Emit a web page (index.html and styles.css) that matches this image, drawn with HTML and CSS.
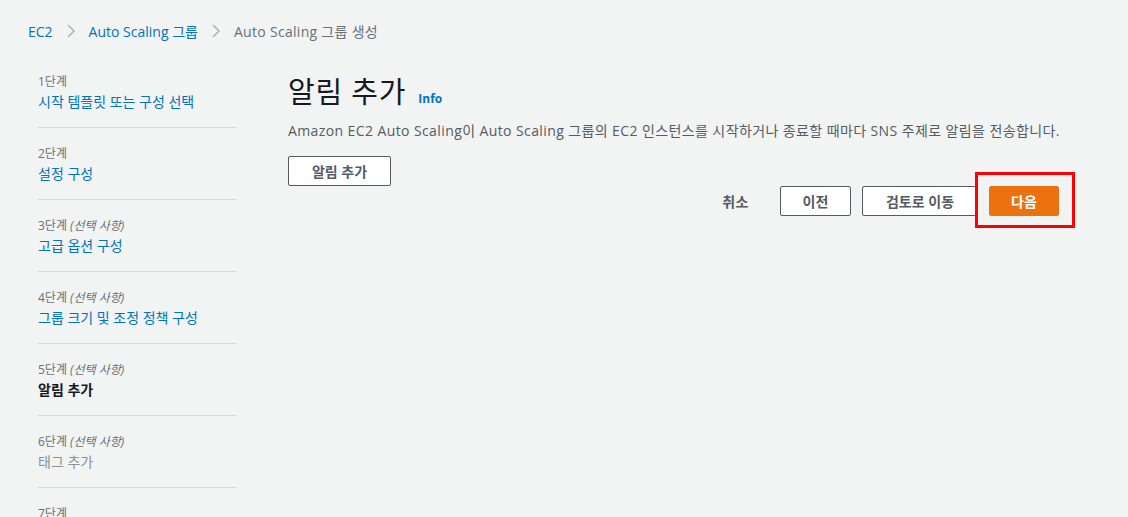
FILE: index.html
```html
<!DOCTYPE html>
<html lang="ko">
<head>
<meta charset="utf-8">
<link rel="stylesheet" href="styles.css">
</head>
<body>
<div class="page">
  <nav class="crumbs">
    <a class="crumb link">EC2</a>
    <svg class="chev" width="12" height="16" viewBox="0 0 12 16"><path d="M3 2 L9 8 L3 14" fill="none" stroke="#aab7b8" stroke-width="1.6"/></svg>
    <a class="crumb link">Auto Scaling 그룹</a>
    <svg class="chev" width="12" height="16" viewBox="0 0 12 16"><path d="M3 2 L9 8 L3 14" fill="none" stroke="#aab7b8" stroke-width="1.6"/></svg>
    <span class="crumb current">Auto Scaling 그룹 생성</span>
  </nav>
  <div class="layout">
    <ul class="steps">
      <li class="step"><div class="label">1단계</div><div class="title link">시작 템플릿 또는 구성 선택</div></li>
      <li class="step"><div class="label">2단계</div><div class="title link">설정 구성</div></li>
      <li class="step"><div class="label">3단계 <i>(선택 사항)</i></div><div class="title link">고급 옵션 구성</div></li>
      <li class="step"><div class="label">4단계 <i>(선택 사항)</i></div><div class="title link">그룹 크기 및 조정 정책 구성</div></li>
      <li class="step"><div class="label">5단계 <i>(선택 사항)</i></div><div class="title active">알림 추가</div></li>
      <li class="step"><div class="label">6단계 <i>(선택 사항)</i></div><div class="title disabled">태그 추가</div></li>
      <li class="step"><div class="label">7단계</div><div class="title disabled">검토</div></li>
    </ul>
    <main class="main">
      <div class="heading"><h1>알림 추가</h1><a class="info">Info</a></div>
      <p class="desc">Amazon EC2 Auto Scaling이 Auto Scaling 그룹의 EC2 인스턴스를 시작하거나 종료할 때마다 SNS 주제로 알림을 전송합니다.</p>
      <button class="btn add">알림 추가</button>
      <div class="actions">
        <button class="btn-link">취소</button>
        <button class="btn w70">이전</button>
        <button class="btn review">검토로 이동</button>
        <div class="primary-wrap">
          <button class="btn primary">다음</button>
          <div class="highlight"></div>
        </div>
      </div>
    </main>
  </div>
</div>
</body>
</html>
```

FILE: styles.css
```css
html, body {
  margin: 0;
  padding: 0;
  background: #f2f3f3;
}
body {
  font-family: "Open Sans", "Noto Sans CJK KR", sans-serif;
  color: #16191f;
  height: 517px;
  overflow: hidden;
}
.page {
  padding: 20px 0 0 28px;
}
.crumbs {
  display: flex;
  align-items: center;
  height: 22px;
  font-size: 14px;
  gap: 12px;
}
.crumb.current { letter-spacing: 0.3px; }
.link { color: #0073bb; text-decoration: none; }
.crumb.current { color: #687078; }
.chev { display: block; }
.layout {
  display: flex;
  margin-top: 32px;
}
.steps {
  list-style: none;
  margin: 0 0 0 10px;
  padding: 0;
  width: 199px;
  flex: none;
}
.step {
  border-bottom: 1px solid #d5dbdb;
  height: 71px;
}
.step .label {
  font-size: 12px;
  color: #687078;
  line-height: 16px;
  padding-top: 18px;
}
.step:first-child .label { padding-top: 0; }
.step:first-child { height: 53px; }
.step .label i { font-style: italic; }
.step .title {
  font-size: 14px;
  line-height: 22px;
  margin-top: 1px;
}
.step .title.active { color: #16191f; font-weight: 700; }
.step .title.disabled { color: #879596; }
.main {
  margin-left: 51px;
  flex: 1;
  position: relative;
}
.heading {
  display: flex;
  align-items: baseline;
  gap: 12px;
}
h1 {
  font-size: 29px;
  font-weight: 400;
  margin: 0;
  line-height: 36px;
  letter-spacing: 0.8px;
  color: #16191f;
}
.info {
  font-size: 12px;
  font-weight: 700;
  color: #0073bb;
}
.desc {
  margin: 11px 0 15px;
  font-size: 14px;
  line-height: 20px;
  letter-spacing: 0.4px;
  color: #545b64;
}
.btn {
  font-family: inherit;
  font-size: 14px;
  font-weight: 700;
  color: #545b64;
  background: #fff;
  border: 1px solid #545b64;
  border-radius: 2px;
  height: 30px;
  padding: 0 20px;
  box-sizing: border-box;
  cursor: pointer;
}
.btn.add { width: 103px; }
.btn.w70 { width: 71px; }
.btn.review { width: 116px; }
.actions {
  display: flex;
  justify-content: flex-end;
  align-items: center;
  gap: 11px;
  padding-right: 69px;
  margin-top: 0;
}
.btn-link {
  font-family: inherit;
  font-size: 14px;
  font-weight: 700;
  color: #545b64;
  background: none;
  border: none;
  padding: 0 20px 0 0;
  height: 30px;
  letter-spacing: 0.5px;
}
.primary-wrap { position: relative; }
.btn.primary {
  background: #ec7211;
  border-color: #ec7211;
  color: #fff;
  width: 70px;
}
.highlight {
  position: absolute;
  left: -14px;
  top: -14px;
  width: 100px;
  height: 56px;
  border: 3px solid #ff0000;
  box-sizing: border-box;
  pointer-events: none;
}
```
